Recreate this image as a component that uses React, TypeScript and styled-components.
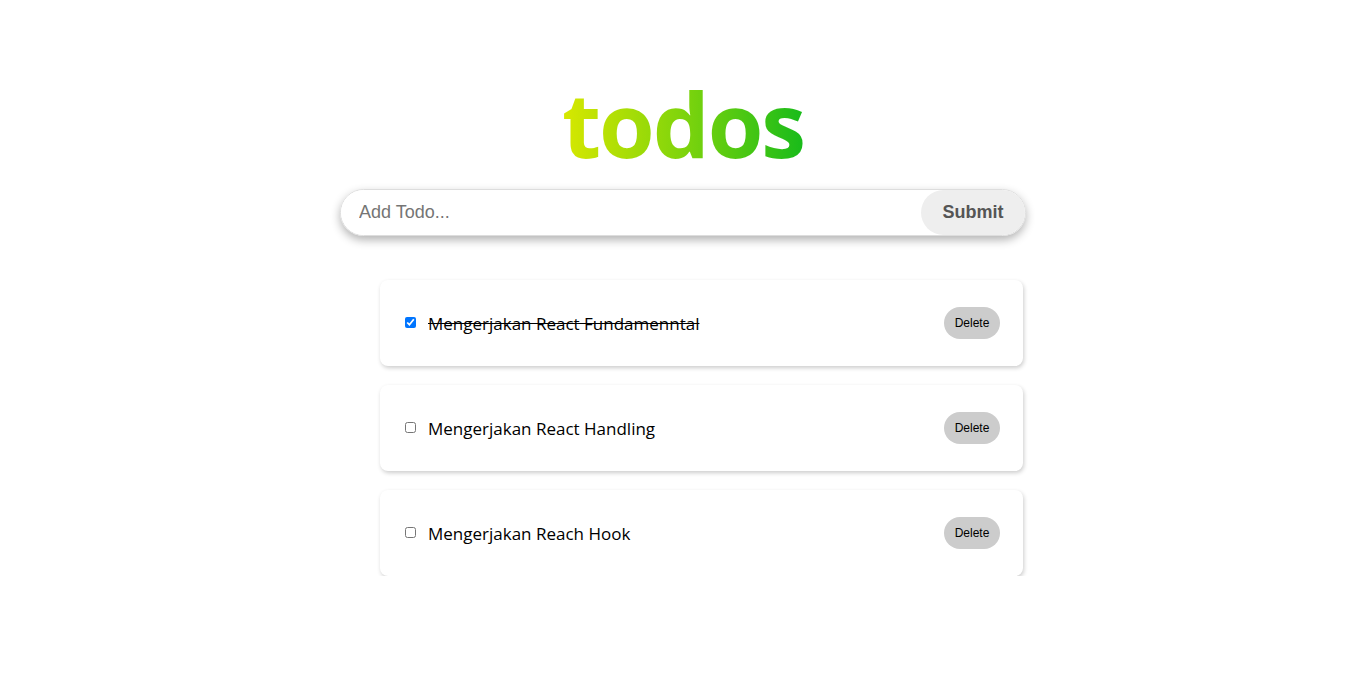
import { useState } from "react";
import styled, { createGlobalStyle } from "styled-components";

const GlobalStyle = createGlobalStyle`
  body {
    margin: 0;
    background: #fff;
    font-family: "Open Sans", "Noto Sans", sans-serif;
  }
`;

type Todo = {
  id: number;
  title: string;
  completed: boolean;
};

const initialTodos: Todo[] = [
  { id: 1, title: "Mengerjakan React Fundamenntal", completed: true },
  { id: 2, title: "Mengerjakan React Handling", completed: false },
  { id: 3, title: "Mengerjakan Reach Hook", completed: false },
];

const App = () => {
  const [todos, setTodos] = useState<Todo[]>(initialTodos);
  const [title, setTitle] = useState("");

  const toggleTodo = (id: number) => {
    setTodos(todos.map(t => (t.id === id ? { ...t, completed: !t.completed } : t)));
  };

  const deleteTodo = (id: number) => {
    setTodos(todos.filter(t => t.id !== id));
  };

  const handleSubmit = (e: React.FormEvent) => {
    e.preventDefault();
    if (!title.trim()) return;
    setTodos([...todos, { id: Date.now(), title, completed: false }]);
    setTitle("");
  };

  return (
    <Page>
      <GlobalStyle />
      <Container>
        <Title>todos</Title>
        <Form onSubmit={handleSubmit}>
          <Input
            type="text"
            placeholder="Add Todo..."
            value={title}
            onChange={e => setTitle(e.target.value)}
          />
          <SubmitBtn type="submit">Submit</SubmitBtn>
        </Form>
        <TodoList>
          {todos.map(todo => (
            <TodoItem key={todo.id}>
              <Label>
                <Checkbox
                  type="checkbox"
                  checked={todo.completed}
                  onChange={() => toggleTodo(todo.id)}
                />
                <TodoText $done={todo.completed}>{todo.title}</TodoText>
              </Label>
              <DeleteBtn onClick={() => deleteTodo(todo.id)}>Delete</DeleteBtn>
            </TodoItem>
          ))}
        </TodoList>
      </Container>
    </Page>
  );
};

const Page = styled.div`
  display: flex;
  justify-content: center;
  padding-top: 63px;
`;

const Container = styled.div`
  width: 686px;
  display: flex;
  flex-direction: column;
  align-items: center;
`;

const Title = styled.h1`
  margin: 0;
  font-family: "Open Sans", "Noto Sans", sans-serif;
  font-weight: 700;
  font-size: 90px;
  line-height: 120px;
  letter-spacing: -2px;
  background: linear-gradient(90deg, #d8e800 0%, #7fd40c 50%, #18bb1a 100%);
  -webkit-background-clip: text;
  background-clip: text;
  color: transparent;
`;

const Form = styled.form`
  width: 100%;
  height: 47px;
  margin-top: 6px;
  display: flex;
  border: 1px solid #ddd;
  box-sizing: border-box;
  border-radius: 24px;
  overflow: hidden;
  box-shadow: 0 4px 10px rgba(0, 0, 0, 0.3);
`;

const Input = styled.input`
  flex: 1;
  border: none;
  outline: none;
  padding: 0 18px;
  font-family: "Liberation Sans", Arial, sans-serif;
  font-size: 18px;
  color: #333;

  &::placeholder {
    color: #757575;
  }
`;

const SubmitBtn = styled.button`
  width: 104px;
  border: none;
  background: #eee;
  border-radius: 24px 0 0 24px;
  font-family: "Liberation Sans", Arial, sans-serif;
  font-weight: 700;
  font-size: 18px;
  color: #555;
  cursor: pointer;
`;

const TodoList = styled.ul`
  width: 100%;
  box-sizing: border-box;
  list-style: none;
  margin: 44px 0 0;
  padding: 0 3px 0 40px;
  display: flex;
  flex-direction: column;
  gap: 19px;
`;

const TodoItem = styled.li`
  height: 86px;
  display: flex;
  align-items: center;
  justify-content: space-between;
  padding: 0 23px 0 24px;
  border-radius: 8px;
  background: #fff;
  box-shadow: 1px 2px 4px rgba(0, 0, 0, 0.2);
`;

const Label = styled.label`
  display: flex;
  align-items: center;
  gap: 12px;
`;

const Checkbox = styled.input`
  margin: -2px 0 0 1px;
  width: 11px;
  height: 11px;
`;

const TodoText = styled.span<{ $done: boolean }>`
  font-family: "Open Sans", "Noto Sans", sans-serif;
  font-size: 17px;
  color: #000;
  text-decoration: ${p => (p.$done ? "line-through" : "none")};
`;

const DeleteBtn = styled.button`
  width: 56px;
  height: 32px;
  border: none;
  border-radius: 16px;
  background: #ccc;
  font-family: "Liberation Sans", Arial, sans-serif;
  font-size: 12px;
  color: #000;
  cursor: pointer;
`;

export default App;
